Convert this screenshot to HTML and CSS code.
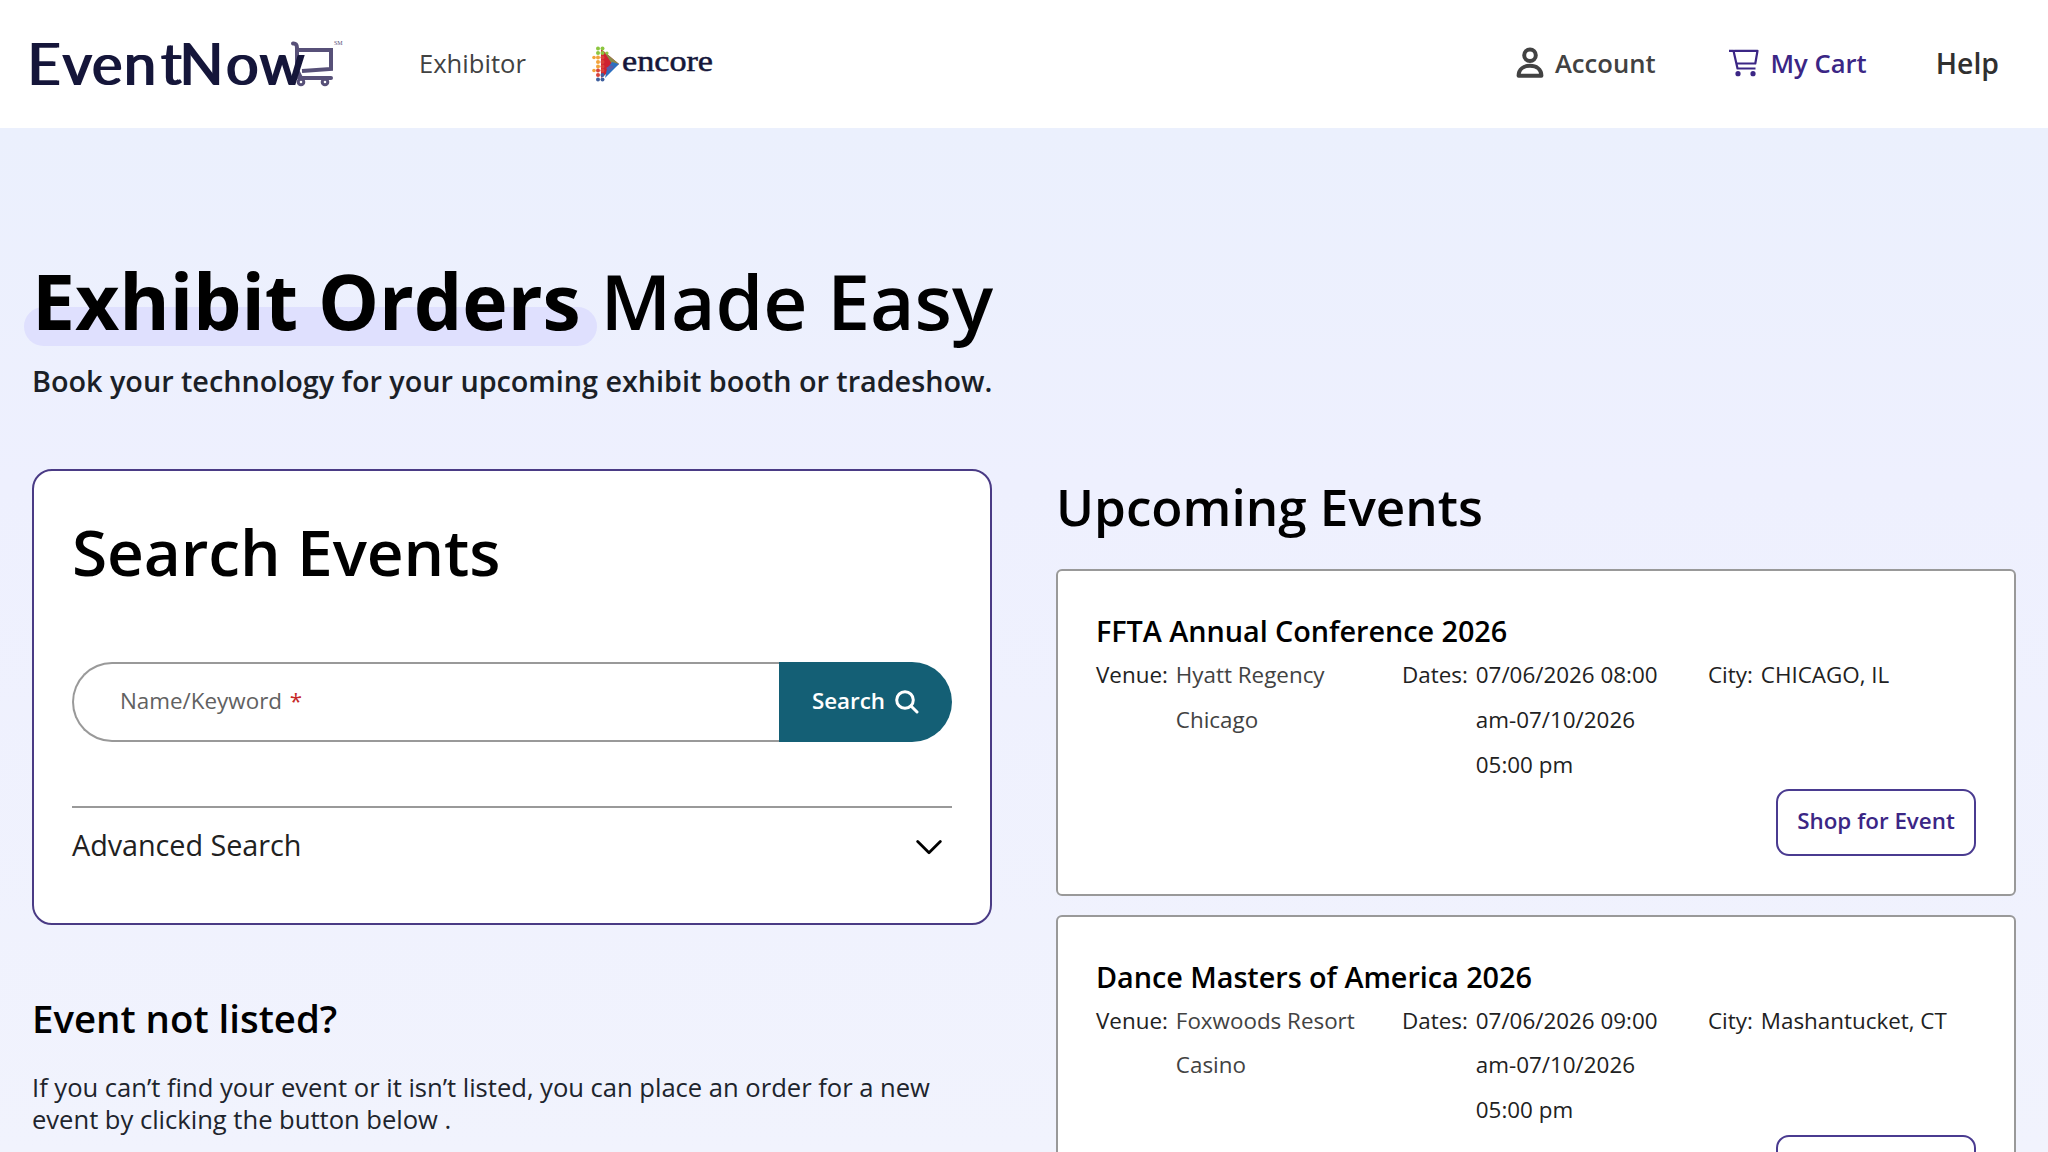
FILE: index.html
```html
<!DOCTYPE html>
<html lang="en">
  <head>
    <meta charset="UTF-8" />
    <meta name="viewport" content="width=device-width, initial-scale=1.0" />
    <title>EventNow Exhibitor</title>
    <link rel="stylesheet" href="styles.css">
  </head>
  <body>
    <header class="header">
      <a class="logo" href="#">
        <svg width="328" height="72" viewBox="20 27 328 72">
          <g fill="none" stroke="#575078" stroke-width="4" stroke-linecap="round">
            <path d="M293 43.500Q297 43 297 48V70L301 78" />
            <path d="M297 50H331V69L302 71" stroke-linecap="butt" />
            <path d="M299 78H331" />
            <circle cx="301" cy="82" r="2.800" fill="#fff" stroke-width="3" />
            <circle cx="325" cy="82" r="2.800" fill="#fff" stroke-width="3" />
          </g>
          <text class="logo-text" y="84.500" x="26.500 61.500 91 123 160 178.500 225 258.500">EventNow</text>
          <text class="logo-sm" x="334" y="45">SM</text>
        </svg>
      </a>
      <a class="nav-exhibitor" href="#">Exhibitor</a>
      <a class="encore" href="#">
        <svg width="126" height="40" viewBox="590 43 126 40">
          <path d="M601 49L619 64L601 78Z" fill="#cf2030" />
          <path d="M604 51.500L619 64H612Z" fill="#8b8a48" />
          <path d="M619 64L605 78L607 69L612 62Z" fill="#2d6fc0" />
          <path d="M606 68l5-3 3 2-5 4z" fill="#5c5ca8" />
          <g fill="#8cc63f">
            <circle cx="598" cy="48.500" r="2" /><circle cx="602.500" cy="48.500" r="2" />
            <circle cx="598" cy="53" r="2" /><circle cx="602.500" cy="53" r="2" /><circle cx="607" cy="53" r="1.600" />
          </g>
          <g fill="#f2a33a">
            <circle cx="594" cy="57.500" r="1.800" /><circle cx="598" cy="57.500" r="2" />
            <circle cx="598" cy="62" r="2" /><circle cx="598" cy="66.500" r="2" />
            <circle cx="594" cy="70.500" r="1.800" />
          </g>
          <g fill="#d9433a">
            <circle cx="602.500" cy="57.500" r="2" /><circle cx="602.500" cy="62" r="2" /><circle cx="602.500" cy="66.500" r="2" />
            <circle cx="598" cy="70.500" r="2" /><circle cx="602.500" cy="70.500" r="2" /><circle cx="598" cy="75" r="2" />
          </g>
          <g fill="#3f5f9e">
            <circle cx="602.500" cy="75" r="2" /><circle cx="598" cy="79.500" r="2" /><circle cx="602.500" cy="79.500" r="2" />
          </g>
          <text class="encore-text" x="622" y="71" textLength="91" lengthAdjust="spacingAndGlyphs">encore</text>
        </svg>
      </a>
      <nav class="nav">
        <a class="nav-item" href="#">
          <svg class="icon-user" width="28" height="32" viewBox="0 0 28 32" fill="none" stroke="currentColor" stroke-width="4">
            <circle cx="14" cy="8.300" r="5.800" />
            <path d="M2.600 28.800C2.600 22 8 18.800 14 18.800S25.400 22 25.400 28.800Z" stroke-linejoin="round" />
          </svg>
          <span>Account</span>
        </a>
        <a class="nav-item cart" href="#">
          <svg class="icon-cart" width="30" height="28" viewBox="0 0 30 28" fill="none" stroke="currentColor" stroke-width="2.200">
            <path d="M0 1.800H4.500L8.500 19.500H26.500M5.200 1.800H28.500L26.300 14.500H7.400" stroke-linejoin="round" />
            <circle cx="9" cy="24.700" r="2.600" fill="currentColor" stroke="none" />
            <circle cx="24" cy="24.700" r="2.600" fill="currentColor" stroke="none" />
          </svg>
          <span>My Cart</span>
        </a>
        <a class="nav-item help" href="#">Help</a>
      </nav>
    </header>

    <main class="main">
      <h1 class="title"><strong class="highlight">Exhibit Orders</strong> Made Easy</h1>
      <p class="subtitle">Book your technology for your upcoming exhibit booth or tradeshow.</p>

      <div class="columns">
        <section class="left">
          <div class="search-card">
            <h2>Search Events</h2>
            <div class="search-bar">
              <div class="search-field">Name/Keyword <span class="required">*</span></div>
              <button class="search-btn">
                <span>Search</span>
                <svg width="24" height="24" viewBox="0 0 24 24" fill="none" stroke="currentColor" stroke-width="3" stroke-linecap="round">
                  <circle cx="10" cy="10" r="8.300" />
                  <path d="M16 16L22 22" />
                </svg>
              </button>
            </div>
            <div class="advanced">
              <span>Advanced Search</span>
              <svg width="26" height="15" viewBox="0 0 26 15" fill="none" stroke="#000" stroke-width="2.800" stroke-linecap="round" stroke-linejoin="round">
                <path d="M1.700 1.500L13 12.800L24.300 1.500" />
              </svg>
            </div>
          </div>
          <h3>Event not listed?</h3>
          <p class="not-listed">If you can’t find your event or it isn’t listed, you can place an order for a new event by clicking the button below .</p>
        </section>

        <section class="right">
          <h2>Upcoming Events</h2>
          <article class="event">
            <h4>FFTA Annual Conference 2026</h4>
            <dl class="details">
              <div><dt>Venue:</dt><dd class="venue">Hyatt Regency Chicago</dd></div>
              <div><dt>Dates:</dt><dd>07/06/2026 08:00 am-07/10/2026 05:00 pm</dd></div>
              <div><dt>City:</dt><dd>CHICAGO, IL</dd></div>
            </dl>
            <button class="shop-btn">Shop for Event</button>
          </article>
          <article class="event">
            <h4>Dance Masters of America 2026</h4>
            <dl class="details">
              <div><dt>Venue:</dt><dd class="venue">Foxwoods Resort Casino</dd></div>
              <div><dt>Dates:</dt><dd>07/06/2026 09:00 am-07/10/2026 05:00 pm</dd></div>
              <div><dt>City:</dt><dd>Mashantucket, CT</dd></div>
            </dl>
            <button class="shop-btn" aria-label="Shop for Event"></button>
          </article>
        </section>
      </div>
    </main>
  </body>
</html>
```
FILE: styles.css
```css
* {
  box-sizing: border-box;
}

html {
  overflow: hidden;
}

body {
  margin: 0;
  height: 1152px;
  overflow: hidden;
  font-family: "Open Sans", sans-serif;
  color: #212121;
  background: #fff;
}

h1, h2, h3, h4, p, dl, dd {
  margin: 0;
}

h2, h3, h4 {
  font-weight: 600;
  color: #000;
}

a {
  color: inherit;
  text-decoration: none;
}

button {
  font-family: inherit;
}

svg {
  display: block;
  flex: none;
}

/* header */

.header {
  display: flex;
  align-items: center;
  height: 128px;
  padding: 0 49px 2px 20px;
}

/* the shadow only thickens the vertical stems */
.logo-text {
  font-family: Lato, sans-serif;
  font-size: 57.5px;
  fill: #15163a;
  filter: drop-shadow(2px 0 0 #15163a);
}

.logo-sm {
  font-family: "Liberation Serif", serif;
  font-size: 6px;
  fill: #575078;
}

.nav-exhibitor {
  margin-left: 71px;
  font-size: 25.6px;
  color: #424242;
}

.encore {
  margin-left: 64px;
}

.encore-text {
  font-family: "Liberation Serif", serif;
  font-size: 30px;
  fill: #15163a;
  stroke: #15163a;
  stroke-width: 0.5px;
}

.nav {
  display: flex;
  align-items: center;
  margin-left: auto;
}

.nav-item {
  display: flex;
  align-items: center;
  font-size: 25.6px;
  font-weight: 600;
  color: #424242;
}

.icon-user {
  margin-right: 11px;
}

.icon-cart {
  margin-right: 12px;
}

.cart {
  margin-left: 73px;
  color: #3b2685;
}

.help {
  margin-left: 69px;
  padding-bottom: 1px;
  font-size: 28.4px;
  color: #303030;
}

/* hero */

.main {
  height: 1024px;
  padding: 124px 32px 0;
  overflow: hidden;
  background: linear-gradient(#ebf0fd, #eef0fe 35%, #f1f3fd);
}

.title {
  font-size: 76.8px;
  line-height: 97px;
  font-weight: 600;
  letter-spacing: -0.08px;
  color: #000;
}

.highlight {
  position: relative;
  z-index: 0;
  font-weight: 700;
}

.highlight::before {
  content: "";
  position: absolute;
  z-index: -1;
  left: -8px;
  right: -16px;
  bottom: 7px;
  height: 39px;
  border-radius: 20px;
  background: #dfe0fe;
}

.subtitle {
  margin-top: 12px;
  font-size: 28.8px;
  line-height: 40px;
  font-weight: 600;
  letter-spacing: -0.03px;
  color: #1b1f27;
}

.columns {
  display: grid;
  grid-template-columns: 960px 960px;
  gap: 64px;
  margin-top: 68px;
}

/* search */

.search-card {
  height: 456px;
  padding: 41px 38px 39px;
  border: 2px solid #4a3b85;
  border-radius: 20px;
  background: #fff;
}

.search-card h2 {
  font-size: 64px;
  line-height: 80px;
  letter-spacing: -0.12px;
}

.search-bar {
  display: flex;
  height: 80px;
  margin-top: 70px;
}

.search-field {
  flex: 1;
  padding-left: 46px;
  border: 2px solid #999;
  border-right: 0;
  border-radius: 40px 0 0 40px;
  font-size: 22.4px;
  line-height: 73px;
  color: #616161;
}

.required {
  margin-left: 2px;
  color: #c62828;
}

.search-btn {
  display: flex;
  justify-content: center;
  align-items: center;
  gap: 10px;
  width: 173px;
  padding: 0;
  border: 0;
  border-radius: 0 40px 40px 0;
  font-size: 22.4px;
  font-weight: 600;
  color: #fff;
  background: #145f75;
}

.search-btn span {
  padding-bottom: 3px;
}

.advanced {
  display: flex;
  justify-content: space-between;
  align-items: center;
  height: 76px;
  margin-top: 64px;
  padding-right: 10px;
  border-top: 2px solid #999;
  font-size: 28.8px;
  letter-spacing: -0.05px;
}

.advanced span {
  padding-bottom: 2px;
}

.advanced svg {
  margin-top: 4px;
}

.left h3 {
  margin-top: 69px;
  font-size: 38.4px;
  line-height: 48px;
}

.not-listed {
  margin-top: 30px;
  font-size: 25.6px;
  line-height: 32.4px;
  letter-spacing: -0.02px;
  color: #20242c;
}

/* events */

.right h2 {
  padding-top: 5px;
  margin-bottom: 31px;
  font-size: 51.2px;
  line-height: 64px;
}

.event {
  height: 327px;
  margin-bottom: 18.6px;
  padding: 41px 38px 39px;
  border: 2px solid #999;
  border-radius: 6px;
  background: #fff;
}

.event h4 {
  font-size: 28.8px;
  line-height: 38px;
  letter-spacing: -0.04px;
}

.details {
  display: grid;
  grid-template-columns: 306px 306px 1fr;
  margin-top: 3px;
  font-size: 22.4px;
  line-height: 44.8px;
}

.details div {
  display: flex;
  gap: 8px;
  padding-right: 42px;
}

.details div:last-child {
  padding-right: 0;
}

.venue {
  color: #424242;
}

.shop-btn {
  display: block;
  width: 200px;
  height: 67px;
  margin: 2px 0 0 auto;
  padding: 0 0 4px;
  border: 2px solid #4a3b90;
  border-radius: 13px;
  font-size: 22.4px;
  font-weight: 600;
  color: #3b2685;
  background: #fff;
}
```
